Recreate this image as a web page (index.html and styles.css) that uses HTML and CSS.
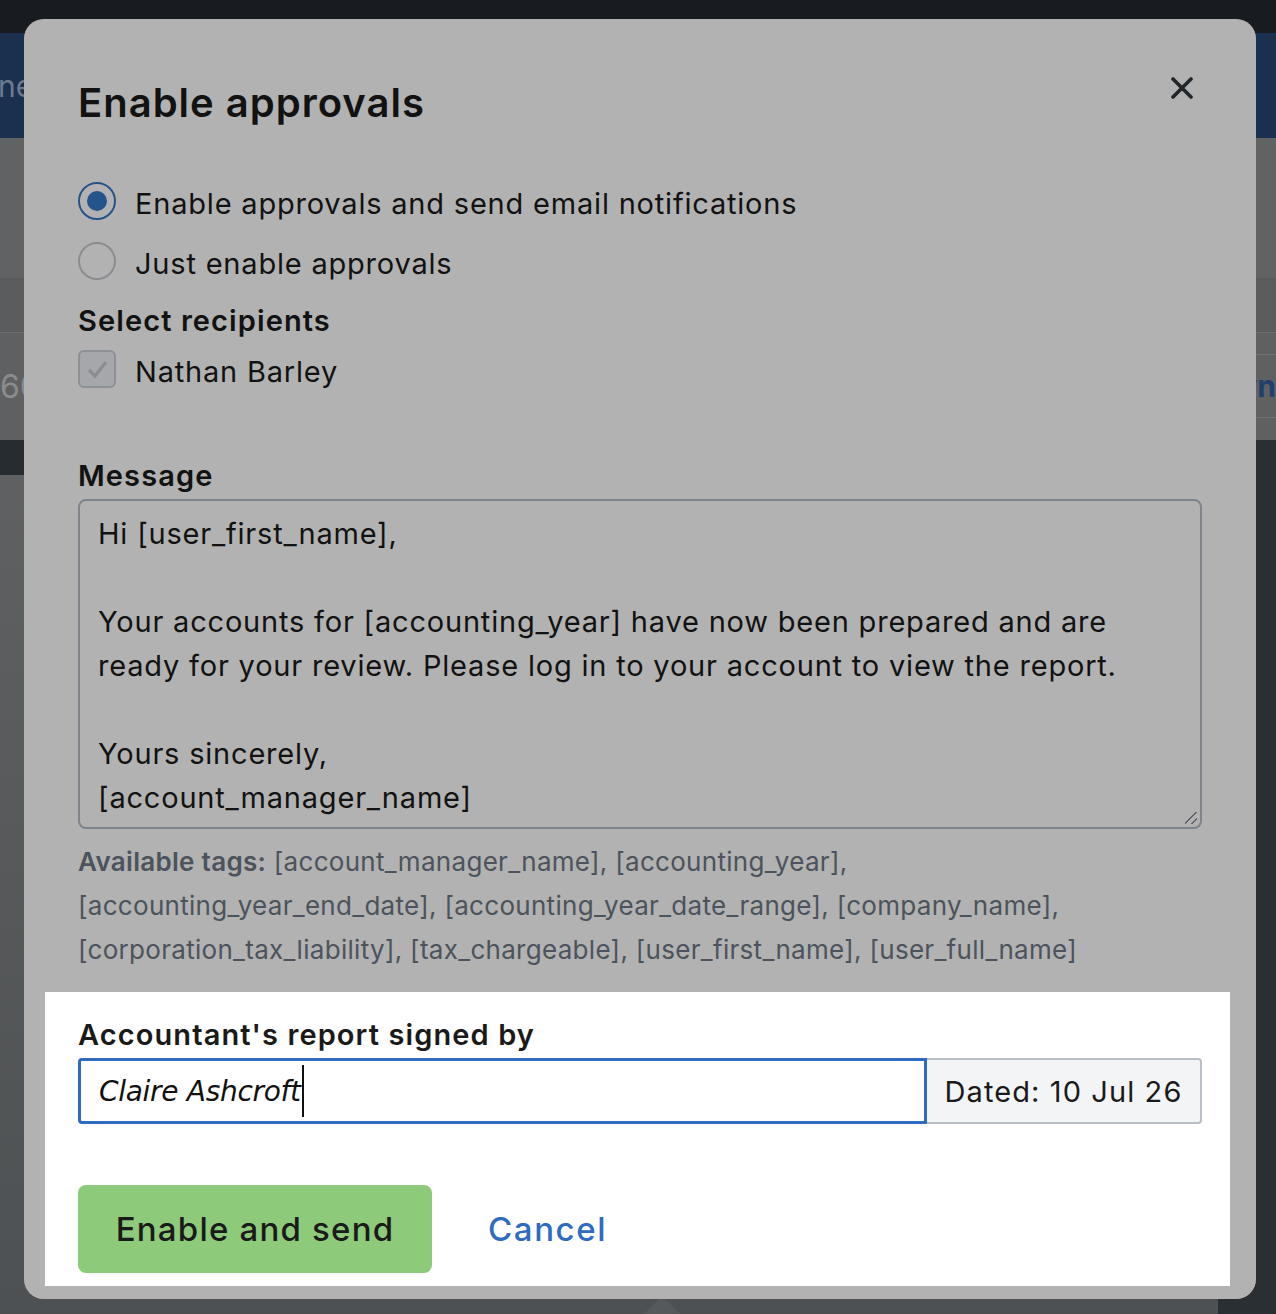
FILE: index.html
```html
<!DOCTYPE html>
<html lang="en">

<head>
  <meta charset="UTF-8">
  <meta name="viewport" content="width=device-width, initial-scale=1.0">
  <title>Enable approvals</title>
  <link rel="stylesheet" href="styles.css">
</head>

<body>

  <div id="app">
    <div class="topbar"></div>
    <div class="header">
      <span class="header-tab">ne</span>
    </div>
    <div class="toolbar"></div>
    <div class="tabs"></div>
    <div class="table-row">
      <span class="cell-num">60</span>
      <div class="cell-side">
        <span class="cell-link">yn</span>
      </div>
    </div>
    <div class="main">
      <div class="content">
        <div class="darkstrip"></div>
        <span class="pointer"></span>
      </div>
      <div class="sidebar"></div>
    </div>
  </div>

  <div class="modal">
    <div class="modal-header">
      <h1 class="modal-title">Enable approvals</h1>
      <button class="close-btn" aria-label="Close">
        <svg width="22" height="22" viewBox="0 0 22 22">
          <path d="M2 2 L20 20 M20 2 L2 20" stroke="#30363b" stroke-width="3.6" stroke-linecap="round" fill="none" />
        </svg>
      </button>
    </div>

    <div class="options">
      <div class="option">
        <span class="radio checked"></span>
        Enable approvals and send email notifications
      </div>
      <div class="option">
        <span class="radio"></span>
        Just enable approvals
      </div>
    </div>

    <div class="field-label">Select recipients</div>
    <div class="option">
      <span class="checkbox">
        <svg width="26" height="26" viewBox="0 0 26 26">
          <path d="M5 14 L11 20 L22 6" stroke="#c4cad1" stroke-width="3.2" fill="none" />
        </svg>
      </span>
      Nathan Barley
    </div>

    <div class="field-label message-label">Message</div>
    <div class="textarea">
      Hi [user_first_name],<br>
      <br>
      Your accounts for [accounting_year] have now been prepared and are<br>
      ready for your review. Please log in to your account to view the report.<br>
      <br>
      Yours sincerely,<br>
      [account_manager_name]
      <span class="grip"></span>
    </div>

    <p class="tags">
      <b>Available tags:</b> [account_manager_name], [accounting_year],<br>
      [accounting_year_end_date], [accounting_year_date_range], [company_name],<br>
      [corporation_tax_liability], [tax_chargeable], [user_first_name], [user_full_name]
    </p>

    <div class="spotlight">
      <div class="field-label">Accountant's report signed by</div>
      <div class="input-group">
        <div class="sign-input">Claire Ashcroft<span class="caret"></span></div>
        <div class="date-addon">Dated: 10 Jul 26</div>
      </div>
      <div class="actions">
        <button class="btn-send">Enable and send</button>
        <a href="#" class="btn-cancel">Cancel</a>
      </div>
    </div>
  </div>

</body>

</html>
```

FILE: styles.css
```css
body {
  margin: 0;
  height: 1314px;
  overflow: hidden;
  background-color: #5d5f60;
  font-family: 'Inter', 'Noto Sans', sans-serif;
  color: #1a1a1a;
}

/* page behind the modal (already dimmed) */

#app {
  display: flex;
  flex-direction: column;
  height: 1314px;
}

.topbar {
  height: 33px;
  background-color: #181c20;
}

.header {
  height: 105px;
  background-color: #1b2f4e;
  display: flex;
  align-items: center;
}

.header-tab {
  font-size: 30px;
  color: #6c7a8e;
  margin-left: -2px;
}

.toolbar {
  height: 140px;
  background-color: #616264;
}

.tabs {
  height: 54px;
  background-color: #5a5c5e;
  border-bottom: 1px solid #6c6d6f;
}

.table-row {
  height: 107px;
  background-color: #5f6061;
  display: flex;
  justify-content: space-between;
  align-items: center;
}

.cell-num {
  font-size: 32px;
  color: #8a8c8e;
}

.cell-side {
  align-self: stretch;
  margin-top: 21px;
  height: 62px;
  border-top: 1px solid #6e6f71;
  border-bottom: 1px solid #6e6f71;
  display: flex;
  align-items: center;
}

.cell-link {
  font-size: 30px;
  font-weight: bold;
  color: #213f6c;
}

.main {
  flex: 1;
  display: flex;
}

.content {
  flex: 1;
  position: relative;
  background: linear-gradient(#5f6162, #4e5153);
}

.darkstrip {
  height: 35px;
  background-color: #272c31;
}

.pointer {
  position: absolute;
  left: 644px;
  bottom: 0;
  border: 18px solid transparent;
  border-top: none;
  border-bottom-color: #56595b;
}

.sidebar {
  width: 58px;
  background-color: #2a2f33;
}

/* modal */

.modal {
  position: absolute;
  top: 19px;
  left: 24px;
  width: 1232px;
  height: 1280px;
  box-sizing: border-box;
  padding: 0 54px;
  background-color: #fff;
  border-radius: 20px;
  overflow: hidden;
  font-size: 29px;
  letter-spacing: 0.8px;
}

.modal-header {
  display: flex;
  justify-content: space-between;
  align-items: flex-start;
  padding-top: 60px;
}

.modal-title {
  margin: 0;
  font-size: 40px;
  line-height: 48px;
  font-weight: 600;
  letter-spacing: 1px;
}

.close-btn {
  border: none;
  background: none;
  padding: 0;
  margin: -2px 9px 0 0;
  width: 22px;
  height: 22px;
}

.options {
  margin-top: 53px;
  display: flex;
  flex-direction: column;
  gap: 16px;
}

.option {
  display: flex;
  align-items: center;
  gap: 19px;
  height: 44px;
  box-sizing: border-box;
  padding-top: 2px;
}

.radio {
  width: 38px;
  height: 38px;
  margin-top: -4px;
  box-sizing: border-box;
  border: 2px solid #c6cacf;
  border-radius: 50%;
  display: flex;
  align-items: center;
  justify-content: center;
}

.radio.checked {
  border-color: #3579c6;
}

.radio.checked::after {
  content: '';
  width: 20px;
  height: 20px;
  border-radius: 50%;
  background-color: #3579c6;
}

.checkbox {
  width: 38px;
  height: 38px;
  margin-top: -4px;
  box-sizing: border-box;
  border: 2px solid #cbd0d6;
  border-radius: 6px;
  background-color: #edf0f4;
  display: flex;
  align-items: center;
  justify-content: center;
}

.field-label {
  line-height: 44px;
  font-weight: 600;
  letter-spacing: 1.1px;
  margin-top: 15px;
  margin-bottom: 5px;
}

.message-label {
  margin-top: 62px;
  margin-bottom: 1px;
}

.textarea {
  position: relative;
  height: 330px;
  box-sizing: border-box;
  border: 2px solid #b7bec6;
  border-radius: 8px;
  padding: 11px 18px 9px;
  line-height: 44px;
}

.grip {
  position: absolute;
  right: 3px;
  bottom: 3px;
  width: 12px;
  height: 12px;
  background: linear-gradient(135deg, transparent 45%, #8a9097 45%, #8a9097 53%, transparent 53%, transparent 72%, #8a9097 72%, #8a9097 80%, transparent 80%);
}

.tags {
  margin: 11px 0 0;
  font-size: 26px;
  line-height: 44px;
  letter-spacing: 0.3px;
  color: #6d7884;
}

.tags b {
  font-weight: 600;
}

/* the highlighted part of the modal, the rest is shaded */

.spotlight {
  position: relative;
  z-index: 1;
  margin: 20px -28px 0 -33px;
  padding: 21px 28px 13px 33px;
  background-color: #fff;
  box-shadow: 0 0 0 2000px rgba(0, 0, 0, 0.3);
}

.spotlight .field-label {
  margin: 0 0 1px;
}

.input-group {
  display: flex;
  height: 66px;
}

.sign-input {
  flex: 1;
  box-sizing: border-box;
  border: 3px solid #2f6bbf;
  border-radius: 4px 0 0 4px;
  padding: 0 18px;
  display: flex;
  align-items: center;
  font-family: 'DejaVu Sans', sans-serif;
  font-style: italic;
  font-size: 28px;
  letter-spacing: -0.3px;
  color: #111;
}

.caret {
  width: 2px;
  height: 52px;
  margin-left: 1px;
  background-color: #111;
}

.date-addon {
  width: 275px;
  box-sizing: border-box;
  border: 2px solid #b7bec6;
  border-left: none;
  border-radius: 0 4px 4px 0;
  background-color: #f3f4f6;
  display: flex;
  align-items: center;
  justify-content: center;
  letter-spacing: 1.1px;
}

.actions {
  display: flex;
  align-items: center;
  gap: 56px;
  margin-top: 61px;
}

.btn-send {
  width: 354px;
  height: 88px;
  border: none;
  border-radius: 8px;
  background-color: #8dcb7b;
  font-family: inherit;
  font-size: 33px;
  font-weight: 500;
  letter-spacing: 1.2px;
  color: #1a1a1a;
}

.btn-cancel {
  font-size: 33px;
  font-weight: 500;
  letter-spacing: 1.6px;
  color: #2f6bbf;
  text-decoration: none;
}
```
